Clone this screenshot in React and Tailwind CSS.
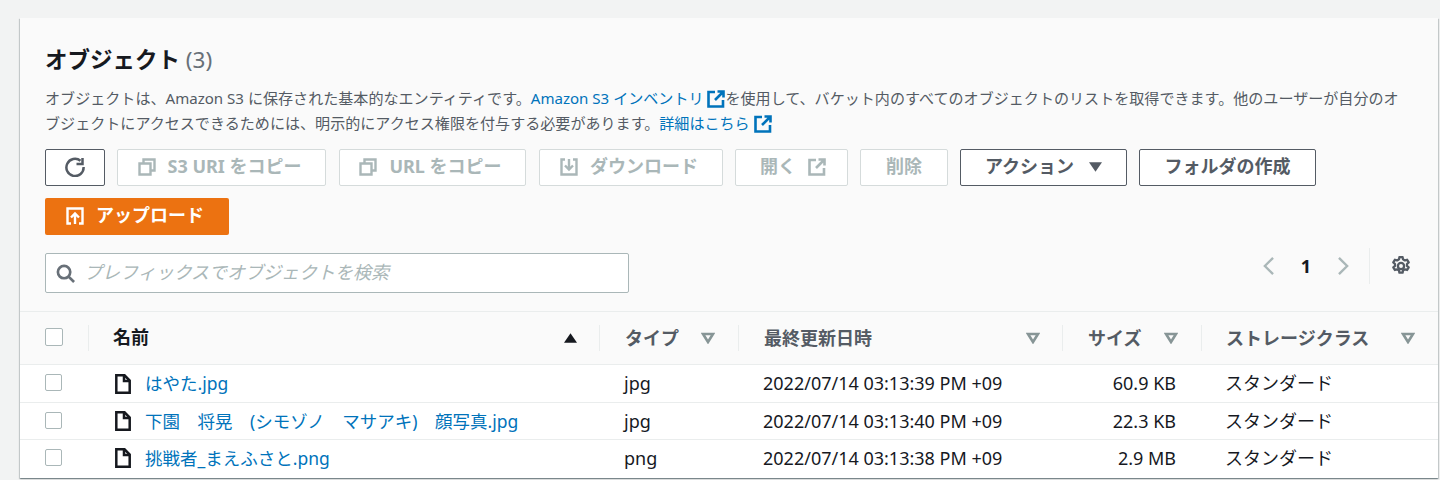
const ROWS = [
    { name: "はやた.jpg", type: "jpg", date: "2022/07/14 03:13:39 PM +09", size: "60.9 KB", rowClass: "h-[38px]" },
    { name: "下園　将晃　(シモゾノ　マサアキ)　顔写真.jpg", type: "jpg", date: "2022/07/14 03:13:40 PM +09", size: "22.3 KB", rowClass: "h-[37px]" },
    { name: "挑戦者_まえふさと.png", type: "png", date: "2022/07/14 03:13:38 PM +09", size: "2.9 MB", rowClass: "h-[38px]" }
];

function ExternalIcon({ className }) {
    return (
        <svg viewBox="0 0 18 18" fill="none" stroke="currentColor" strokeWidth="2.6" className={className}>
            <path d="M8 2H1.5v14.5H16V10" />
            <path d="M10.5 1.5h6v6M16.5 1.5 8 10" />
        </svg>
    );
}

function CopyIcon() {
    return (
        <svg viewBox="0 0 18 18" fill="none" stroke="currentColor" strokeWidth="2.4" className="h-[18px] w-[18px]">
            <path d="M1.5 5.5h11v11h-11z" />
            <path d="M5.5 5V1.5h11v11H13" />
        </svg>
    );
}

function FileIcon() {
    return (
        <svg viewBox="0 0 16 20" fill="none" stroke="#16191f" strokeWidth="2.5" className="h-[20px] w-[16px]">
            <path d="M1.3 1.3h8.2l5.2 5.2v12.2H1.3z" />
            <path d="M9 1.5v5.5h5.5" />
        </svg>
    );
}

function SortDown() {
    return (
        <svg viewBox="0 0 14 12" className="h-[12px] w-[14px]" fill="none" stroke="#879596" strokeWidth="2.6">
            <path d="M2 2h10L7 10z" />
        </svg>
    );
}

function ToolbarButton({ width, disabled, children }) {
    return (
        <button
            className={`flex h-[37px] ${width} items-center justify-center gap-[12px] rounded-[2px] border pb-[2px] text-[18px] font-bold ${
                disabled ? "border-[#d5dbdb] bg-white text-[#aab7b8]" : "border-[#545b64] bg-white text-[#545b64]"
            }`}
        >
            {children}
        </button>
    );
}

function HeaderCell({ label, children, className }) {
    return (
        <div className={`flex h-[26px] items-center justify-between border-l border-[#eaeded] ${className}`}>
            <span className="text-[18px] font-bold text-[#545b64]">{label}</span>
            {children || <SortDown />}
        </div>
    );
}

export default function App() {
    return (
        <div
            className="h-[480px] overflow-hidden bg-[#f2f3f3] pl-[20px] pr-[2px] pt-[18px]"
            style={{ fontFamily: '"Noto Sans", "Noto Sans CJK JP", sans-serif' }}
        >
            <div className="h-[460px] bg-[#fafafa] shadow-[0_1px_1px_0_rgba(0,28,36,0.3),1px_1px_1px_0_rgba(0,28,36,0.15),-1px_1px_1px_0_rgba(0,28,36,0.15)]">
                <div className="px-[25px] pt-[24px]">
                    <h2 className="h-[36px] text-[22.5px] leading-[36px] font-bold text-[#16191f]">
                        オブジェクト <span className="font-normal text-[#687078]">(3)</span>
                    </h2>
                    <p className="mt-[8px] w-[1360px] text-[15.07px] leading-[25px] text-[#545b64]">
                        オブジェクトは、Amazon S3 に保存された基本的なエンティティです。
                        <span className="text-[#0073bb]">
                            Amazon S3 インベントリ <ExternalIcon className="inline h-[18px] w-[18px] align-[-4px]" />
                        </span>
                        を使用して、バケット内のすべてのオブジェクトのリストを取得できます。他のユーザーが自分のオブジェクトにアクセスできるためには、明示的にアクセス権限を付与する必要があります。
                        <span className="text-[#0073bb]">
                            詳細はこちら <ExternalIcon className="inline h-[18px] w-[18px] align-[-4px]" />
                        </span>
                    </p>

                    <div className="mt-[13px] flex w-[1290px] flex-wrap gap-x-[12px] gap-y-[12px]">
                        <ToolbarButton width="w-[60px]">
                            <svg viewBox="0 0 20 20" fill="none" stroke="#545b64" strokeWidth="2.5" className="h-[20px] w-[20px]">
                                <path d="M15.5 3.8A8.6 8.6 0 1 0 18.6 10" />
                                <path d="M17.5 1v6h-6" />
                            </svg>
                        </ToolbarButton>
                        <ToolbarButton width="mr-px w-[209px] pr-[4px]" disabled>
                            <CopyIcon />
                            S3 URI をコピー
                        </ToolbarButton>
                        <ToolbarButton width="mr-px w-[187px] pr-[4px]" disabled>
                            <CopyIcon />
                            URL をコピー
                        </ToolbarButton>
                        <ToolbarButton width="w-[184px] pr-[4px]" disabled>
                            <svg viewBox="0 0 18 18" fill="none" stroke="currentColor" strokeWidth="2.4" className="h-[18px] w-[18px]">
                                <path d="M5 1.5H1.5v15h15v-15H13" />
                                <path d="M9 1v10M5 7.5l4 4 4-4" />
                            </svg>
                            ダウンロード
                        </ToolbarButton>
                        <ToolbarButton width="w-[113px] pl-[3px]" disabled>
                            開く
                            <ExternalIcon className="h-[18px] w-[18px]" />
                        </ToolbarButton>
                        <ToolbarButton width="w-[88px]" disabled>
                            削除
                        </ToolbarButton>
                        <ToolbarButton width="w-[167px]">
                            アクション
                            <svg viewBox="0 0 14 10" className="ml-[3px] h-[10px] w-[13px]" fill="#545b64">
                                <path d="M0 0h14L7 10z" />
                            </svg>
                        </ToolbarButton>
                        <ToolbarButton width="w-[177px]">フォルダの作成</ToolbarButton>
                        <button className="flex h-[37px] w-[184px] items-center justify-center gap-[12px] rounded-[2px] bg-[#ec7211] pr-[4px] pb-[2px] text-[18px] font-bold text-white">
                            <svg viewBox="0 0 18 18" fill="none" stroke="currentColor" strokeWidth="2.4" className="h-[18px] w-[18px]">
                                <path d="M5 16.5H1.5v-15h15v15H13" />
                                <path d="M9 17V7M5 10.5l4-4 4 4" />
                            </svg>
                            アップロード
                        </button>
                    </div>

                    <div className="mt-[18px] flex h-[40px] items-center justify-between">
                        <div className="flex h-[40px] w-[584px] items-center gap-[9px] rounded-[2px] border border-[#aab7b8] bg-white pl-[10px]">
                            <svg viewBox="0 0 20 20" fill="none" stroke="#687078" strokeWidth="2.8" className="h-[19px] w-[19px]">
                                <circle cx="8.5" cy="8.5" r="6.5" />
                                <path d="m13 13 6 6" />
                            </svg>
                            <span className="pb-[2px] text-[18px] text-[#aab7b8] italic">プレフィックスでオブジェクトを検索</span>
                        </div>
                        <div className="mb-[14px] flex h-[36px] items-center">
                            <svg viewBox="0 0 14 22" fill="none" stroke="#aab7b8" strokeWidth="2.6" className="h-[20px] w-[13px]">
                                <path d="M12 2 3 11l9 9" />
                            </svg>
                            <span className="mx-[26px] text-[18px] font-bold text-[#16191f]">1</span>
                            <svg viewBox="0 0 14 22" fill="none" stroke="#aab7b8" strokeWidth="2.6" className="h-[20px] w-[13px]">
                                <path d="m2 2 9 9-9 9" />
                            </svg>
                            <div className="mr-[21px] ml-[19px] h-[36px] border-l border-[#eaeded]" />
                            <svg viewBox="1 1 18 18" fill="none" stroke="#545b64" strokeWidth="2.1" strokeLinejoin="round" className="mr-[2px] h-[20px] w-[20px]">
                                <circle cx="10" cy="10" r="2.8" />
                                <path d="M8.6 2h2.8l.4 2 1.7 1 2-.6 1.4 2.4-1.5 1.4v1.6l1.5 1.4-1.4 2.4-2-.6-1.7 1-.4 2H8.6l-.4-2-1.7-1-2 .6-1.4-2.4 1.5-1.4V8.2L3.1 6.8l1.4-2.4 2 .6 1.7-1z" />
                            </svg>
                        </div>
                    </div>
                </div>

                <div className="mt-[18px] grid h-[54px] grid-cols-[68px_511px_139px_324px_139px_1fr] items-center border-y border-[#eaeded]">
                    <div className="flex items-center pb-[2px] pl-[25px]">
                        <span className="h-[18px] w-[18px] rounded-[2px] border border-[#aab7b8] bg-white" />
                    </div>
                    <HeaderCell className="pr-[22px] pl-[24px]" label="">
                        <span className="flex w-full items-center justify-between">
                            <span className="pb-[2px] text-[18px] font-bold text-[#16191f]">名前</span>
                            <svg viewBox="0 0 14 10" className="h-[10px] w-[13px]" fill="#16191f">
                                <path d="M7 0l7 10H0z" />
                            </svg>
                        </span>
                    </HeaderCell>
                    <HeaderCell className="pr-[23px] pl-[25px]" label="タイプ" />
                    <HeaderCell className="pr-[22px] pl-[25px]" label="最終更新日時" />
                    <HeaderCell className="pr-[23px] pl-[25px]" label="サイズ" />
                    <HeaderCell className="pr-[23px] pl-[24px]" label="ストレージクラス" />
                </div>

                {ROWS.map((row) => (
                    <div
                        key={row.date}
                        className={`grid ${row.rowClass} grid-cols-[68px_511px_139px_324px_139px_1fr] items-center border-b border-[#eaeded] bg-white text-[18px] text-[#16191f] last:border-b-0 last:pb-[2px]`}
                    >
                        <div className="flex items-center pb-[2px] pl-[25px]">
                            <span className="h-[17px] w-[17px] rounded-[2px] border border-[#aab7b8] bg-white" />
                        </div>
                        <div className="flex items-center gap-[14px] pl-[27px] text-[17.5px] text-[#0073bb]">
                            <FileIcon />
                            <span>{row.name}</span>
                        </div>
                        <div className="pl-[25px]">{row.type}</div>
                        <div className="pl-[25px]">{row.date}</div>
                        <div className="pr-[25px] text-right">{row.size}</div>
                        <div className="pl-[24px]">スタンダード</div>
                    </div>
                ))}
            </div>
        </div>
    );
}
